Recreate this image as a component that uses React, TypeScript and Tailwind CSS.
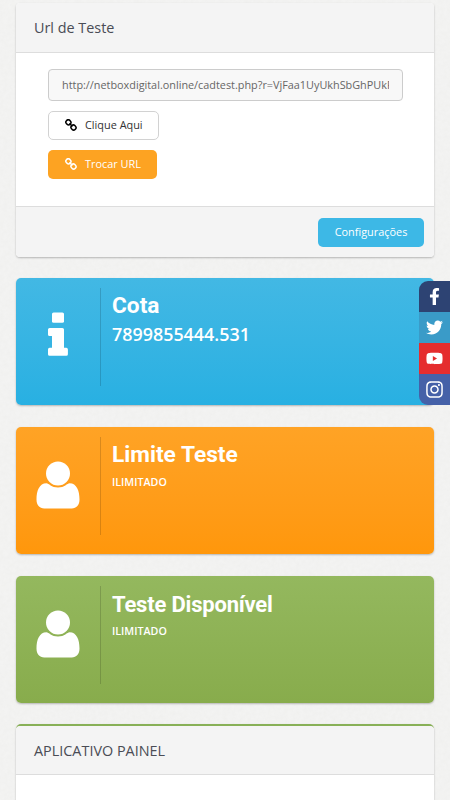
import { clsx } from "clsx";
import type { ReactNode } from "react";
import { FaFacebookF, FaInstagram, FaTwitter, FaYoutube } from "react-icons/fa";

const testUrl = "http://netboxdigital.online/cadtest.php?r=VjFaa1UyUkhSbGhPUkR";

// two chain links joined on the diagonal
const LinkIcon = () => (
  <svg
    className="-mt-0.5 shrink-0"
    width="12"
    height="12"
    viewBox="0 0 12 12"
    fill="none"
    stroke="currentColor"
    strokeWidth="1.5"
    strokeLinecap="round"
  >
    <rect x="0.9" y="1" width="5" height="4.600" rx="2.100" transform="rotate(45 3.400 3.300)" />
    <rect x="6" y="6.200" width="5" height="4.600" rx="2.100" transform="rotate(45 8.500 8.500)" />
    <path d="M4.900 4.800 7 7" />
  </svg>
);

const InfoIcon = () => (
  <svg width="20" height="44" viewBox="0 0 20 44" fill="currentColor">
    <rect x="4" y="0.4" width="12" height="10.4" rx="1.6" />
    <path d="M1.6 16h12.8q1.6 0 1.6 1.6v18.2h2.300q1.600 0 1.600 1.600v4.800q0 1.600-1.600 1.600H1.600Q0 43.800 0 42.200v-4.800q0-1.600 1.600-1.600H4V24H1.600Q0 24 0 22.400v-4.800Q0 16 1.600 16z" />
  </svg>
);

const UserIcon = () => (
  <svg width="44" height="48" viewBox="0 0 44 48" fill="currentColor">
    <circle cx="22" cy="12.500" r="12" />
    <path d="M10.500 22.300c2.200 0 5 4.300 11.500 4.300s9.300-4.300 11.500-4.300c7.300 0 10 7.700 10 16.200 0 5.700-3 8.900-7.800 8.900H8.300c-4.800 0-7.800-3.200-7.800-8.900 0-8.500 2.700-16.200 10-16.200z" />
  </svg>
);

// faint paper grain behind the page
const PaperTexture = () => (
  <svg className="absolute inset-0 -z-10 size-full opacity-15">
    <filter id="paper">
      <feTurbulence type="fractalNoise" baseFrequency="0.25" numOctaves="3" />
      <feColorMatrix
        type="matrix"
        values="0 0 0 0 0.75  0 0 0 0 0.75  0 0 0 0 0.72  1.600 0 0 0 -0.4"
      />
    </filter>
    <rect width="100%" height="100%" filter="url(#paper)" />
  </svg>
);

const socials = [
  { name: "Facebook", icon: <FaFacebookF size={17} />, color: "bg-[#2d4373]" },
  { name: "Twitter", icon: <FaTwitter size={17} />, color: "bg-[#3a9bc8]" },
  { name: "YouTube", icon: <FaYoutube size={17} />, color: "bg-[#e52d2e]" },
  {
    name: "Instagram",
    icon: <FaInstagram size={19} />,
    color: "bg-[#4561a8]",
  },
];

type StatCardProps = {
  title: string;
  icon: ReactNode;
  color: string;
  titleStyle: string;
  className?: string;
  children: ReactNode;
};

const StatCard = ({
  title,
  icon,
  color,
  titleStyle,
  className,
  children,
}: StatCardProps) => (
  <section
    className={clsx(
      "flex h-[127px] rounded-[5px] py-[10px] text-white shadow-[0_1px_2px_rgba(0,0,0,0.25)] bg-linear-to-b",
      color,
      className
    )}
  >
    <div className="flex h-[98px] w-[85px] shrink-0 justify-center border-r border-black/15 pt-[24px]">
      {icon}
    </div>
    <div className="pl-[11px]">
      <h2 className={clsx("font-[Roboto] font-bold", titleStyle)}>{title}</h2>
      {children}
    </div>
  </section>
);

export default function App() {
  return (
    <div className="relative isolate h-[800px] w-[450px] overflow-hidden bg-[#f3f3f2] px-4 pt-[3px] font-['Open_Sans',sans-serif]">
      <PaperTexture />

      <section className="h-[254px] rounded-[4px] bg-white shadow-[0_1px_2px_rgba(0,0,0,0.25)]">
        <header className="h-[50px] rounded-t-[4px] border-b border-[#dddddd] bg-[#f4f4f4] pl-[18px]">
          <h2 className="text-[14.400px] leading-[50px] text-[#4a4c55]">
            Url de Teste
          </h2>
        </header>
        <div className="flex h-[153px] flex-col items-start px-8 pt-4">
          <input
            readOnly
            value={testUrl}
            className="h-8 w-[355px] rounded-[4px] border border-[#cccccc] bg-[#f8f8f8] px-[13px] pb-0.5 text-[10.850px] text-[#666666]"
          />
          <button className="mt-[10px] flex h-[29px] w-[111px] items-center gap-2 rounded-[5px] border border-[#d2d2d2] bg-white pl-4 text-[10.900px] text-[#333333]">
            <span className="text-black">
              <LinkIcon />
            </span>
            Clique Aqui
          </button>
          <button className="mt-[10px] flex h-[29px] w-[109px] items-center gap-2 rounded-[5px] bg-[#fda322] pl-[17px] text-[10.900px] text-white">
            <LinkIcon />
            Trocar URL
          </button>
        </div>
        <footer className="flex h-[51px] items-start justify-end rounded-b-[4px] border-t border-[#dddddd] bg-[#f4f4f4] pt-[11px] pr-[10px]">
          <button className="h-[29px] w-[106px] rounded-[5px] bg-[#3db8e6] text-[10.900px] text-white">
            Configurações
          </button>
        </footer>
      </section>

      <StatCard
        title="Cota"
        icon={<InfoIcon />}
        color="from-[#42b8e4] to-[#28b0e2]"
        titleStyle="pt-px text-[22.700px] leading-[34px]"
        className="mt-[21px]"
      >
        <p className="-mt-px text-[17.900px] leading-6 font-semibold">
          7899855444.531
        </p>
      </StatCard>

      <StatCard
        title="Limite Teste"
        icon={<UserIcon />}
        color="from-[#ffa325] to-[#ff970b]"
        titleStyle="pt-px text-[22.700px] leading-[34px]"
        className="mt-[22px]"
      >
        <p className="text-[10.700px] leading-5 font-semibold">ILIMITADO</p>
      </StatCard>

      <StatCard
        title="Teste Disponível"
        icon={<UserIcon />}
        color="from-[#94b85e] to-[#88ac4c]"
        titleStyle="pt-0.5 text-[22px] leading-[34px] tracking-[-0.2px]"
        className="mt-[22px]"
      >
        <p className="-mt-px text-[10.700px] leading-5 font-semibold">
          ILIMITADO
        </p>
      </StatCard>

      <section className="mt-[21px] h-[100px] rounded-t-[5px] border-t-2 border-[#88b057] bg-white shadow-[0_1px_2px_rgba(0,0,0,0.25)]">
        <header className="h-[49px] rounded-t-[4px] border-b border-[#dddddd] bg-[#f4f4f4] pl-[18px]">
          <h2 className="text-[14.400px] leading-[49px] text-[#4a4c55]">
            APLICATIVO PAINEL
          </h2>
        </header>
      </section>

      {/* floating social bar */}
      <nav className="absolute top-[281px] right-0 w-[31px] overflow-hidden rounded-l-[9px] text-white">
        {socials.map((social) => (
          <a
            key={social.name}
            aria-label={social.name}
            className={clsx("flex h-[31px] items-center justify-center", social.color)}
          >
            {social.icon}
          </a>
        ))}
      </nav>
    </div>
  );
}
